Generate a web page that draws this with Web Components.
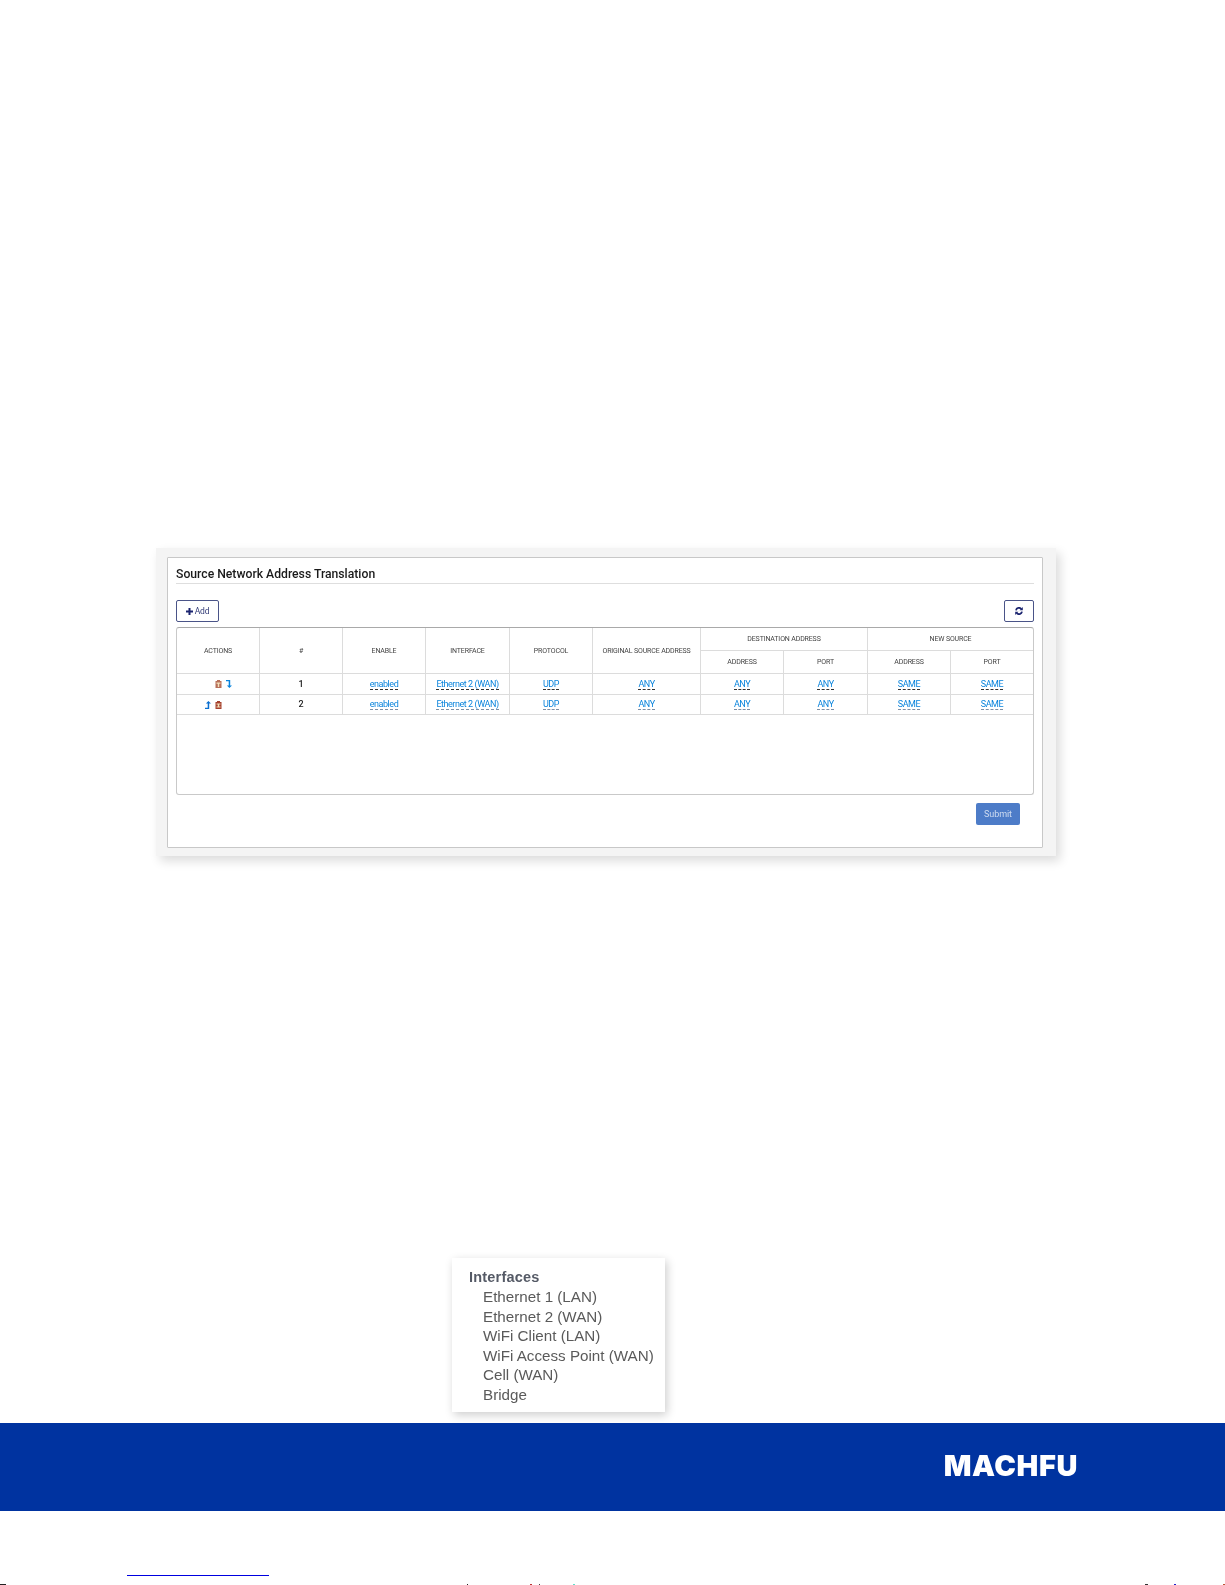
<!DOCTYPE html>
<html>
<head>
<meta charset="utf-8">
<title>Source NAT</title>
<style>
  html, body { margin: 0; padding: 0; background: #fff; }
  body { height: 1585px; overflow: hidden; font-family: Roboto, "Liberation Sans", sans-serif; }
</style>
</head>
<body>
<snat-panel></snat-panel>
<interface-menu title-text="Interfaces">
  <span>Ethernet 1 (LAN)</span>
  <span>Ethernet 2 (WAN)</span>
  <span>WiFi Client (LAN)</span>
  <span>WiFi Access Point (WAN)</span>
  <span>Cell (WAN)</span>
  <span>Bridge</span>
</interface-menu>
<brand-band></brand-band>
<page-foot></page-foot>

<script>
class EditLink extends HTMLElement {
  constructor() {
    super();
    let shadowRoot = this.attachShadow({mode:"open"});
    shadowRoot.innerHTML = `
      <style>
        :host { display:inline-block; margin-top:1px; }
        a {
          color:#0a84dc;
          font:400 9px/9px Roboto, sans-serif;
          letter-spacing:-.45px;
          border-bottom:1px dashed var(--dash, #333);
          text-decoration:none;
          display:block;
        }
      </style>
      <a><slot></slot></a>
    `;
  }
}
customElements.define('edit-link',EditLink);

class RowIcon extends HTMLElement {
  static get icons() {
    return {
      trash: `<svg width="7" height="8" viewBox="0 0 7 8"><path fill="#b8705a" d="M2 0h3v1h1.500v7h-6V1H2z"/><path fill="#f3e2bc" d="M1.500 2.500h4v1.200H4.200V7H2.800V3.700H1.500z"/></svg>`,
      trashDark: `<svg width="7" height="8" viewBox="0 0 7 8"><path fill="#a5402e" d="M2 0h3v1h1.500v7h-6V1H2z"/><path fill="#f3e2bc" d="M1.500 2.500h4v1H4.200v2h1.300v1h-4v-1h1.300v-2H1.500z"/></svg>`,
      down: `<svg width="6" height="8" viewBox="0 0 6 8"><path fill="#0a84dc" d="M0 0h4.200v5.500H6L3.400 8 .9 5.500h1.800V1.300H0z"/></svg>`,
      up: `<svg width="6" height="8" viewBox="0 0 6 8"><path fill="#0a6fd0" d="M0 8h4.200V2.500H6L3.400 0 .9 2.500h1.800v4.200H0z"/></svg>`
    };
  }
  constructor() {
    super();
    let shadowRoot = this.attachShadow({mode:"open"});
    shadowRoot.innerHTML = `
      <style>:host { display:inline-flex; } svg { display:block; }</style>
      ${RowIcon.icons[this.getAttribute('name')]}
    `;
  }
}
customElements.define('row-icon',RowIcon);

class SnatTable extends HTMLElement {
  constructor() {
    super();
    let rows = [
      {n:1, actions:'<row-icon name="trash"></row-icon><row-icon name="down"></row-icon>', cls:'first'},
      {n:2, actions:'<row-icon name="up"></row-icon><row-icon name="trashDark"></row-icon>', cls:'second'}
    ];
    let links = ['enabled','Ethernet 2 (WAN)','UDP','ANY','ANY','ANY','SAME','SAME'];
    let body = rows.map(r => `
      <div class="c act ${r.cls}">${r.actions}</div>
      <div class="c num">${r.n}</div>
      ${links.map(t => `<div class="c ${r.cls}-l"><edit-link>${t}</edit-link></div>`).join('')}
    `).join('');
    let shadowRoot = this.attachShadow({mode:"open"});
    shadowRoot.innerHTML = `
      <style>
        :host { display:block; border:1px solid #c9c9c9; border-top-color:#a9a9a9; border-radius:3px; height:168px; box-sizing:border-box; }
        .grid {
          display:grid;
          grid-template-columns:83px 83px 83px 84px 83px 108px 83px 84px 83px 1fr;
        }
        .head { grid-template-rows:23px 23px; }
        .body { grid-template-rows:21px 20px; }
        .c, .h {
          display:flex; align-items:center; justify-content:center;
          border-right:1px solid #dcdcdc; border-bottom:1px solid #dcdcdc;
          box-sizing:border-box; min-width:0;
        }
        .h { font:400 7px/8px Roboto, sans-serif; letter-spacing:-.14px; color:#444; text-transform:uppercase; }
        .tall { grid-row:span 2; }
        .dest, .src { grid-column:span 2; }
        .end { border-right:none; }
        .c:nth-child(10n) { border-right:none; }
        .num { font:500 9px/9px Roboto, sans-serif; color:#222; }
        .act { gap:4px; }
        .first { padding-left:10px; }
        .second { padding-right:10px; }
        .second-l { --dash:#7d8ea3; }
      </style>
      <div class="grid head">
        <div class="h tall">Actions</div>
        <div class="h tall">#</div>
        <div class="h tall">Enable</div>
        <div class="h tall">Interface</div>
        <div class="h tall">Protocol</div>
        <div class="h tall">Original Source Address</div>
        <div class="h dest">Destination Address</div>
        <div class="h src end">New Source</div>
        <div class="h">Address</div>
        <div class="h">Port</div>
        <div class="h">Address</div>
        <div class="h end">Port</div>
      </div>
      <div class="grid body">${body}</div>
    `;
  }
}
customElements.define('snat-table',SnatTable);

class ToolButton extends HTMLElement {
  constructor() {
    super();
    let shadowRoot = this.attachShadow({mode:"open"});
    shadowRoot.innerHTML = `
      <style>
        :host {
          display:inline-flex; align-items:center; justify-content:center; gap:2px;
          height:22px; box-sizing:border-box;
          border:1px solid #4a5488; border-radius:2px;
          color:#333c78; font:400 8.500px/1 Roboto, sans-serif; letter-spacing:-.2px;
        }
      </style>
      <slot></slot>
    `;
  }
}
customElements.define('tool-button',ToolButton);

class SnatPanel extends HTMLElement {
  constructor() {
    super();
    let shadowRoot = this.attachShadow({mode:"open"});
    shadowRoot.innerHTML = `
      <style>
        :host {
          display:block; box-sizing:border-box;
          width:900px; height:308px; margin:548px 0 0 156px;
          padding:9px 13px 8px 11px;
          background:#f4f4f4;
          box-shadow:4px 5px 10px rgba(0,0,0,.14);
        }
        .card {
          height:100%; box-sizing:border-box;
          background:#fff; border:1px solid #c8c8c8; border-radius:1px;
          padding:0 8px;
          display:flex; flex-direction:column;
          filter:blur(.3px);
        }
        h2 {
          margin:0; height:26px; box-sizing:border-box;
          border-bottom:1px solid #dedede;
          font:500 12.200px/15px Roboto, sans-serif; color:#1a1a1a;
          display:flex; align-items:flex-end; padding-bottom:1px;
        }
        .tools { display:flex; justify-content:space-between; margin:16px 0 5px; }
        .add { width:43px; }
        .refresh { width:30px; }
        .foot { display:flex; justify-content:flex-end; padding:8px 14px 0 0; }
        .submit {
          width:44px; height:22px; display:flex; align-items:center; justify-content:center;
          background:#4d7cc8; border-radius:2px; color:#cfdcf0; font:400 9px/1 Roboto, sans-serif; letter-spacing:-.1px;
        }
        svg { display:block; }
      </style>
      <div class="card">
        <h2>Source Network Address Translation</h2>
        <div class="tools">
          <tool-button class="add">
            <svg width="7" height="7" viewBox="0 0 7 7"><path fill="#1c2570" d="M2.500 0h2v2.500H7v2H4.500V7h-2V4.500H0v-2h2.500z"/></svg>
            <span>Add</span>
          </tool-button>
          <tool-button class="refresh">
            <svg width="8" height="8" viewBox="0 0 8 8"><path fill="none" stroke="#1c2570" stroke-width="1.800" d="M1 3.300A3 3 0 0 1 6.300 2M7 4.700A3 3 0 0 1 1.700 6"/><path fill="#1c2570" d="M7.800 0v3.200H4.600zM.2 8V4.800h3.200z"/></svg>
          </tool-button>
        </div>
        <snat-table></snat-table>
        <div class="foot"><div class="submit">Submit</div></div>
      </div>
    `;
  }
}
customElements.define('snat-panel',SnatPanel);

class InterfaceMenu extends HTMLElement {
  constructor() {
    super();
    let shadowRoot = this.attachShadow({mode:"open"});
    shadowRoot.innerHTML = `
      <style>
        :host {
          display:block; box-sizing:border-box;
          width:213px; height:154px; margin:402px 0 0 452px;
          padding:10px 0 0 17px;
          background:#fff;
          box-shadow:2px 3px 9px rgba(0,0,0,.2);
          font:400 15.200px/19.600px "Liberation Sans", Arial, sans-serif;
          color:#5a5a5a;
        }
        .wrap { filter:blur(.4px); }
        .t { font-weight:700; color:#555a66; font-size:14.500px; letter-spacing:.2px; height:19px; }
        .list { display:flex; flex-direction:column; padding-left:14px; }
      </style>
      <div class="wrap">
        <div class="t">${this.getAttribute('title-text')}</div>
        <div class="list"><slot></slot></div>
      </div>
    `;
  }
}
customElements.define('interface-menu',InterfaceMenu);

class BrandBand extends HTMLElement {
  constructor() {
    super();
    let shadowRoot = this.attachShadow({mode:"open"});
    shadowRoot.innerHTML = `
      <style>
        :host {
          display:flex; align-items:center; justify-content:flex-end; box-sizing:border-box;
          height:88px; margin-top:11px; padding:0 147px 3px 0;
          background:#0033a0;
        }
        .logo { font:900 29px/1 Inter, Lato, sans-serif; color:#fff; letter-spacing:.6px; filter:blur(.3px); }
      </style>
      <div class="logo">MACHFU</div>
    `;
  }
}
customElements.define('brand-band',BrandBand);

class PageFoot extends HTMLElement {
  constructor() {
    super();
    // tops of the clipped line below the picture: [left, width, colour]
    let marks = [[0,6,'#222'],[467,1,'#222'],[530,2,'#b33'],[539,1,'#444'],[573,2,'#6dc'],[1145,3,'#333'],[1174,2,'#22c'],[1223,2,'#b53']];
    let x = 0;
    let dots = marks.map(m => {
      let gap = m[0] - x;
      x = m[0] + m[1];
      return `<i style="margin-left:${gap}px;width:${m[1]}px;background:${m[2]}"></i>`;
    }).join('');
    let shadowRoot = this.attachShadow({mode:"open"});
    shadowRoot.innerHTML = `
      <style>
        :host { display:block; height:74px; padding-top:64px; box-sizing:border-box; }
        .rule { width:142px; height:1px; background:#0000e0; margin:0 0 8px 127px; }
        .marks { display:flex; height:1px; }
        i { display:block; flex:none; }
      </style>
      <div class="rule"></div>
      <div class="marks">${dots}</div>
    `;
  }
}
customElements.define('page-foot',PageFoot);
</script>
</body>
</html>
